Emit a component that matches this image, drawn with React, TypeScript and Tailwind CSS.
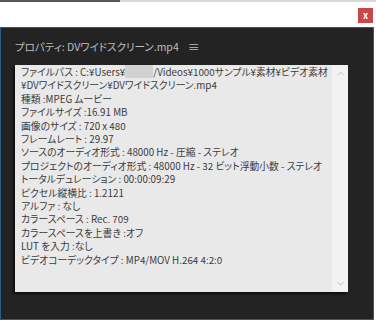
import { ChevronUp, ChevronDown } from 'lucide-react'

const font = { fontFamily: '"Noto Sans CJK JP", sans-serif', fontFeatureSettings: '"palt"' }

// file property lines, in display order
const lines: React.ReactNode[] = [
    <>
        ファイルパス : C:¥Users¥
        <span className="inline-block w-[28px] h-[13px] align-[-2px] bg-[#d2d2d2]" />
        /Videos¥1000サンプル¥素材¥ビデオ素材
    </>,
    '¥DVワイドスクリーン¥DVワイドスクリーン.mp4',
    '種類 :MPEG ムービー',
    'ファイルサイズ :16.91 MB',
    '画像のサイズ : 720 x 480',
    'フレームレート : 29.97',
    'ソースのオーディオ形式 : 48000 Hz - 圧縮 - ステレオ',
    'プロジェクトのオーディオ形式 : 48000 Hz - 32 ビット浮動小数 - ステレオ',
    'トータルデュレーション : 00:00:09:29',
    'ピクセル縦横比 : 1.2121',
    'アルファ : なし',
    'カラースペース : Rec. 709',
    'カラースペースを上書き :オフ',
    'LUT を入力 :なし',
    'ビデオコーデックタイプ : MP4/MOV H.264 4:2:0',
]

export default function App() {
    return (
        <div className="w-[376px] h-[320px] bg-white flex flex-col overflow-hidden" style={font}>
            {/* top strip */}
            <div className="flex h-[2px]">
                <div className="w-[120px] bg-[#5a5a5a]" />
                <div className="flex-1 bg-[#d8d8d8]" />
            </div>

            {/* header with close button */}
            <div className="h-[25px] flex items-start justify-end pr-[3px] pt-[6px]">
                <button className="w-[15px] h-[15px] bg-[#c9474b] text-white text-[9px] font-bold leading-[14px] flex items-center justify-center">
                    x
                </button>
            </div>

            {/* properties panel */}
            <div className="w-[374px] flex-1 flex flex-col bg-[#232323] border border-[#2d5b88]">
                <div className="h-[37px] flex items-center gap-[9px] pl-[14px] pt-[1px] text-[10.5px] text-[#bebebe]">
                    <span>プロパティ: DVワイドスクリーン.mp4</span>
                    <span className="text-[12px] leading-none">≡</span>
                </div>

                <div className="ml-[14px] w-[333px] h-[227px] flex bg-[#e9e9e9] shadow-[-2px_2px_2px_rgba(0,0,0,0.6)]">
                    <div className="flex-1 pl-[6px] pt-[0px] text-[9.8px] leading-[13.4px] text-[#3c3c3c] whitespace-nowrap overflow-hidden">
                        {lines.map((l, i) => (
                            <div key={i}>{l}</div>
                        ))}
                    </div>
                    <div className="w-[16px] bg-[#f2f2f2] flex flex-col justify-between items-center py-[3px] text-[#a8a8a8]">
                        <ChevronUp size={11} strokeWidth={1.5} />
                        <ChevronDown size={11} strokeWidth={1.5} />
                    </div>
                </div>
            </div>
        </div>
    )
}
